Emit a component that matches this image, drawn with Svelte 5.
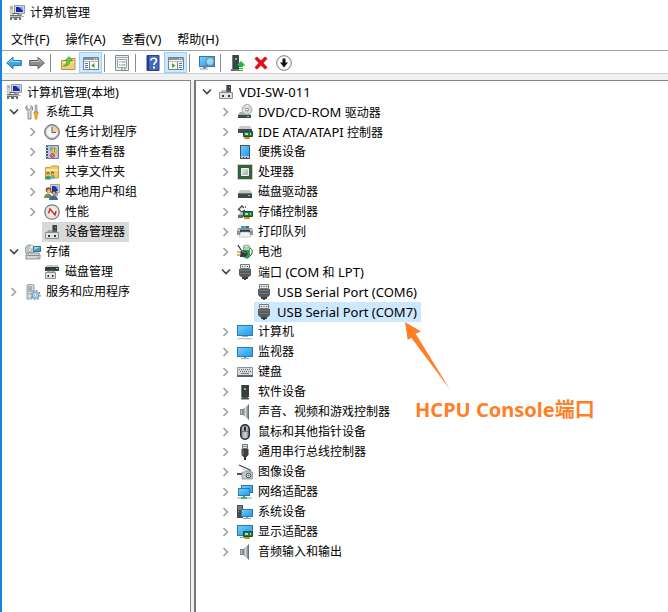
<script>
  let system = $state([
    { text: '计算机管理(本地)', icon: 'manage', root: true, open: true, children: [
      { text: '系统工具', icon: 'tools', open: true, children: [
        { text: '任务计划程序', icon: 'clock', children: [] },
        { text: '事件查看器', icon: 'event', children: [] },
        { text: '共享文件夹', icon: 'shared', children: [] },
        { text: '本地用户和组', icon: 'users', children: [] },
        { text: '性能', icon: 'perf', children: [] },
        { text: '设备管理器', icon: 'device', selected: 'grey' }
      ] },
      { text: '存储', icon: 'storage', open: true, children: [
        { text: '磁盘管理', icon: 'diskmgmt' }
      ] },
      { text: '服务和应用程序', icon: 'services', children: [] }
    ] }
  ]);

  let devices = $state([
    { text: 'VDI-SW-011', icon: 'device', open: true, children: [
      { text: 'DVD/CD-ROM 驱动器', icon: 'dvd', children: [] },
      { text: 'IDE ATA/ATAPI 控制器', icon: 'ide', children: [] },
      { text: '便携设备', icon: 'portable', children: [] },
      { text: '处理器', icon: 'cpu', children: [] },
      { text: '磁盘驱动器', icon: 'disk', children: [] },
      { text: '存储控制器', icon: 'storctl', children: [] },
      { text: '打印队列', icon: 'printer', children: [] },
      { text: '电池', icon: 'battery', children: [] },
      { text: '端口 (COM 和 LPT)', icon: 'port', open: true, children: [
        { text: 'USB Serial Port (COM6)', icon: 'port' },
        { text: 'USB Serial Port (COM7)', icon: 'port', selected: 'blue' }
      ] },
      { text: '计算机', icon: 'computer', children: [] },
      { text: '监视器', icon: 'monitor', children: [] },
      { text: '键盘', icon: 'keyboard', children: [] },
      { text: '软件设备', icon: 'software', children: [] },
      { text: '声音、视频和游戏控制器', icon: 'speaker', children: [] },
      { text: '鼠标和其他指针设备', icon: 'mouse', children: [] },
      { text: '通用串行总线控制器', icon: 'usb', children: [] },
      { text: '图像设备', icon: 'imaging', children: [] },
      { text: '网络适配器', icon: 'network', children: [] },
      { text: '系统设备', icon: 'sysdev', children: [] },
      { text: '显示适配器', icon: 'display', children: [] },
      { text: '音频输入和输出', icon: 'speaker', children: [] }
    ] }
  ]);

  const menus = ['文件(F)', '操作(A)', '查看(V)', '帮助(H)'];
  const tools = [
    ['back', '后退'], ['forward', '前进'], null,
    ['upfolder', '上移一级'], ['paneleft', '显示/隐藏控制台树', true], null,
    ['props', '属性'], null,
    ['help', '帮助'], ['paneright', '显示/隐藏操作窗格', true], null,
    ['scan', '扫描检测硬件改动'], null,
    ['update', '更新驱动程序'], ['remove', '卸载设备'], ['disable', '禁用设备']
  ];

  // Latin runs are set one size up from the Chinese text around them.
  const runs = (text) => text.split(/([\x20-\x7e]+)/).filter(Boolean);
  const isLatin = (run) => run.charCodeAt(0) < 127;
</script>

{#snippet mixed(text)}
  <span class="text">{#each runs(text) as run}{#if isLatin(run)}<span class="latin">{run}</span>{:else}{run}{/if}{/each}</span>
{/snippet}

{#snippet screen(x, y, w, h)}
  <rect {x} {y} width={w} height={h} fill="#2f7ba5" />
  <rect x={x + 1} y={y + 1} width={w - 2} height={h - 2} fill="url(#sky)" />
{/snippet}

{#snippet board()}
  <path d="M6.500 7.500h9v5h-9z" fill="#1f7a50" stroke="#125437" />
  <path d="M8 9h3v2H8zM13 9h1v2h-1z" fill="#b9d8c4" />
  <path d="M7 13h6v2H7z" fill="#f0a11b" /><path d="M9 13v2M11 13v2" stroke="#a86208" stroke-width=".6" />
{/snippet}

{#snippet icon(name)}
  <svg class="icon" viewBox="0 0 16 16" aria-hidden="true">
    {#if name === 'manage'}
      <path d="M5.500.5h10v8h-10z" fill="#d8d8cf" stroke="#9a9a94" />
      <path d="M7 2h7v5H7z" fill="#1328b8" /><path d="M10 2h4v4z" fill="#7fa8ff" />
      <path d="M9 9h4v2h2v1H7v-1h2z" fill="#b4b4ae" />
      <path d="M1 1h3v8H1z" fill="#d7d7d0" stroke="#aaa" stroke-width=".5" /><path d="M1.500 3h2" stroke="#777" />
      <path d="M1 10h11v5H1z" fill="#6c7478" /><path d="M1 11.500h11" stroke="#b8c1c4" /><path d="M3 13h2v2H3zM8 13h2v2H8z" fill="#e9eeee" /><path d="M4 10V8.500h5V10" fill="none" stroke="#596267" />
    {:else if name === 'tools'}
      <path d="M2 1.500v3l2 1 2-1v-3l1.500 1.500v3L6 7.500V15H3V7.500L1 5V3z" fill="#d9dcdd" stroke="#6f7477" stroke-width=".8" />
      <path d="M10 1h2v7h-2z" fill="#bfc4c7" stroke="#777" stroke-width=".5" /><path d="M9 8h4v2l-1 1v3.500l-1 1-1-1V11L9 10z" fill="#f6b522" stroke="#bf7b0c" stroke-width=".7" />
    {:else if name === 'clock'}
      <circle cx="8" cy="8" r="7.400" fill="#aeb3b8" stroke="#696e73" /><circle cx="8" cy="8" r="5.800" fill="#f4f5f2" />
      <path d="M8 8V2.200A5.800 5.800 0 0 1 13.800 8z" fill="#f4d48c" /><path d="M8 3v5.500h4" fill="none" stroke="#555b63" />
    {:else if name === 'event'}
      <path d="M2.500 1.500h12v13h-12z" fill="#b6c7db" stroke="#647c9e" /><path d="M2 2h2v12H2z" fill="#45556f" /><path d="M1 3.500h3M1 6.500h3M1 9.500h3M1 12.500h3" stroke="#c6ccd2" />
      <path d="M6 4h3M6 6h2M6 12h2" stroke="#57729b" /><path d="M10.500 3l3 5h-6z" fill="#ffdb31" stroke="#c39500" stroke-width=".5" /><path d="M10.500 4.500v2M10.500 7v.7" stroke="#443" stroke-width=".8" />
      <circle cx="8.500" cy="11.500" r="2.300" fill="#d9392e" /><path d="M7.700 10.700l1.600 1.600m0-1.600l-1.600 1.600" stroke="#fff" stroke-width=".7" />
    {:else if name === 'shared'}
      <path d="M1.500 3.500h5l1-1.500h7v12h-13z" fill="#f0ca64" stroke="#c99b36" /><path d="M2 5h12v2H2z" fill="#ffe8a1" />
      <circle cx="4" cy="9.500" r="1.500" fill="#704622" /><circle cx="8.500" cy="9" r="1.500" fill="#704622" /><circle cx="4" cy="10.200" r=".9" fill="#efba91" /><circle cx="8.500" cy="9.700" r=".9" fill="#efba91" />
      <path d="M1 15.500c0-5 6-5 6 0z" fill="#3f9275" /><path d="M6 14.500c0-5 5-5 5 0z" fill="#61b2a4" />
    {:else if name === 'users'}
      <path d="M6.500.5h9v8h-9z" fill="#dad9d0" stroke="#a2a29b" /><path d="M8 2h6v5H8z" fill="#1835c2" /><path d="M11 2h3v4z" fill="#82a7ff" /><path d="M9 9h5v3H9z" fill="#aaa" />
      <circle cx="4.500" cy="6" r="2.800" fill="#80552d" /><circle cx="4.800" cy="7" r="1.700" fill="#f0c097" /><circle cx="10" cy="8" r="2.500" fill="#4a341d" /><circle cx="10" cy="9" r="1.600" fill="#e5ac7d" />
      <path d="M0 14c0-6 8-6 8 0z" fill="#6c9550" /><path d="M5 16c0-6 9-6 9 0z" fill="#3e69a2" />
    {:else if name === 'perf'}
      <circle cx="8" cy="8" r="7.200" fill="#f3f3ef" stroke="#777b7d" stroke-width="1.300" /><circle cx="8" cy="8" r="5" fill="none" stroke="#bcbcb9" stroke-dasharray="1 1" />
      <path d="M4.500 9.500L6 5l5 6 1-4" fill="none" stroke="#d52822" stroke-width="1.400" />
    {:else if name === 'device'}
      <path d="M8 1h5v8H8z" fill="#3d4348" /><path d="M8 1h1v8H8z" fill="#7d8487" /><path d="M11 3h1v1h-1z" fill="#61e56b" />
      <path d="M4 9V7h8v2" fill="none" stroke="#777" /><path d="M1.500 8.500h13v6h-13z" fill="#e3e4e4" stroke="#8c9092" /><path d="M4 11h2v2H4zM10 11h2v2h-2z" fill="#353a3f" />
    {:else if name === 'storage'}
      <circle cx="5" cy="6" r="5" fill="#c3c9ca" stroke="#8a9294" /><circle cx="5" cy="6" r="1.500" fill="#fff" stroke="#8a9294" stroke-width=".6" /><path d="M6 1l-1 4 4-2z" fill="#eef4e1" />
      <path d="M8.500 2.500h7v5h-7z" fill="#35a0d2" stroke="#4d6d7d" /><path d="M9 3h6l-6 3z" fill="#8edcf5" />
      <path d="M2 9h12l1 2v4H1v-4z" fill="#d4d8d9" stroke="#777e81" stroke-width=".8" /><path d="M1.500 11.500h13" stroke="#858c8e" /><path d="M12 13h1.500v1H12z" fill="#3bc454" />
    {:else if name === 'diskmgmt'}
      <path d="M2 3l1-2h11l1 2z" fill="#c5c8c9" /><path d="M1 3h14v4H1z" fill="#353b3f" /><path d="M12 4h2v1h-2z" fill="#56e162" /><path d="M4 9V7h6v2" fill="none" stroke="#777" /><path d="M1.500 8.500h10v6h-10z" fill="#e5e6e6" stroke="#8c9092" /><path d="M3.500 11H5v2H3.500zM8 11h1.500v2H8z" fill="#353a3f" />
    {:else if name === 'services'}
      <path d="M2 1l5-1 2 1v12l-2 2H2z" fill="#d3d9db" stroke="#798286" stroke-width=".7" /><path d="M3 3h4M3 5h4M3 7h4" stroke="#6d787e" stroke-width=".8" /><path d="M3 9h1v1H3z" fill="#43b65d" />
      <circle cx="10.500" cy="11" r="4.500" fill="none" stroke="#6d9bbd" stroke-width="1.500" stroke-dasharray="1.700 1.800" /><circle cx="10.500" cy="11" r="3" fill="#dcebf6" stroke="#7fa9c8" stroke-width="1.600" /><circle cx="10.500" cy="11" r="1.200" fill="#fff" stroke="#6d9bbd" stroke-width=".6" />
    {:else if name === 'dvd'}
      <circle cx="10" cy="5.500" r="5" fill="#d5d8d8" stroke="#999e9f" stroke-width=".8" /><circle cx="10" cy="5.500" r="1.500" fill="#fff" stroke="#858b8d" /><path d="M10 1v3M6 7l2-1" stroke="#fff" />
      <path d="M3 8h2l3 2h5l1 1H1z" fill="#a6abad" /><path d="M1 11h13v3H1z" fill="#41484b" /><path d="M10 12h2v1h-2z" fill="#58e765" />
    {:else if name === 'ide'}
      <path d="M1 5l2-3h10l2 3z" fill="#c7caca" /><path d="M1 5h14v4H1z" fill="#454b4e" />
      {@render board()}
    {:else if name === 'portable'}
      <path d="M3 1h10v14H3z" fill="#4a5257" /><path d="M4 2h8v10H4z" fill="url(#sky)" /><path d="M4 12h8v2H4z" fill="#c2c7ca" /><path d="M6 13h1v1H6zM9 13h1v1H9z" fill="#333" />
    {:else if name === 'cpu'}
      <path d="M.5.5h15v15H.5z" fill="none" stroke="#b99b49" stroke-dasharray="1 1" /><path d="M1 1h14v14H1z" fill="#2e6149" /><path d="M4.500 4.500h7v7h-7z" fill="#d2d5d3" stroke="#f2f4f2" /><path d="M5 11l6-6v6z" fill="#b8bdbb" />
    {:else if name === 'disk'}
      <path d="M1 9l2-3h10l2 3z" fill="#c6c9ca" /><path d="M1 9h14v5H1z" fill="#40464a" /><path d="M1 9h14v1H1z" fill="#73797c" /><path d="M11 11h2v1h-2z" fill="#58ea64" />
    {:else if name === 'storctl'}
      <path d="M7 4L5 2 1.500 5.500 5 8l3-2M8 3h1" fill="none" stroke="#444b4f" stroke-width="1.300" /><path d="M2 10l2-2h3v5H1z" fill="#b4babc" /><path d="M1 11h5v3H1z" fill="#666c70" />
      {@render board()}
    {:else if name === 'printer'}
      <path d="M4 2h8v4H4z" fill="#2a9cde" /><path d="M7 2h2v3H7z" fill="#3ec86a" /><path d="M9 2h3v3H9z" fill="#2765cc" /><path d="M1 4h14l1 3v4h-3V9H3v2H0V7z" fill="#8b9396" /><path d="M1 5h2v2H1zM13 5h2v2h-2z" fill="#c4cacd" /><path d="M3 6h10v2H3z" fill="#343a3e" /><path d="M4 8h8l2 5H2z" fill="#f3f5f5" stroke="#a7adb0" stroke-width=".6" />
    {:else if name === 'battery'}
      <path d="M6 2l3-1 4 1v11l-3 2-4-2z" fill="#29a24b" /><ellipse cx="9.500" cy="2.500" rx="3.500" ry="1.500" fill="#cfd6d2" stroke="#8d9591" stroke-width=".6" /><path d="M6.500 4h6v2h-6z" fill="#8fe29c" /><path d="M13 4c3 1 3 6 0 8" fill="none" stroke="#34383a" />
      <path d="M1 1l3 5" stroke="#34383a" stroke-width="1.300" /><path d="M0 8h4M0 11h4" stroke="#c6a339" stroke-width="1.500" /><path d="M4 6l5 1 2 3-3 3-5 0z" fill="#33393c" /><path d="M5 7.500l4 1" stroke="#858d90" />
    {:else if name === 'port'}
      <path d="M3.500.5h9v4h-9z" fill="#e3e3e2" stroke="#777b7d" /><path d="M5 2h1v1H5zM7.500 2h1v1h-1zM10 2h1v1h-1z" fill="#555" /><path d="M2 5h12v6l-2 2H4l-2-2z" fill="#555a5e" /><path d="M3 6.500h10M3 9.500h10" stroke="#74797c" /><path d="M5 13h2v2H5zM7 13h2v3H7zM9 13h2v2H9z" fill="#3d4144" />
    {:else if name === 'computer'}
      {@render screen(0, 1, 16, 11)}
      <path d="M5 12h6v1H5z" fill="#8cb4c7" /><path d="M1 14h14v1H1z" fill="#9faab3" /><path d="M0 15h16" stroke="#d8dfe4" />
    {:else if name === 'monitor'}
      {@render screen(0, 3, 16, 10)}
      <path d="M7 13h2v1H7z" fill="#6c8998" /><path d="M4 14h8v1H4z" fill="#9eb1bd" />
    {:else if name === 'keyboard'}
      <path d="M.5 3.500h15v9H.5z" fill="#d8dbdd" stroke="#8c9296" /><path d="M0 11h16v2H0z" fill="#5d6468" /><path d="M2 5.500h12M3 7.500h11" stroke="#646a6e" stroke-dasharray="1 1" /><path d="M4 9.500h8" stroke="#7b8185" />
    {:else if name === 'software'}
      <path d="M4 1h8v12H4z" fill="#373d40" /><path d="M4 1h1v12H4z" fill="#727779" /><path d="M7 4h2v2H7z" fill="#54df56" /><path d="M5 13h6v1H5zM4 14h8v1.500H4z" fill="#4b5255" />
    {:else if name === 'speaker'}
      <path d="M3 5h3v6H3z" fill="#7f878d" /><path d="M6 5l5-4v14l-5-4z" fill="url(#steel)" /><path d="M11 .5h1v15h-1z" fill="#697177" /><path d="M4 6h1v4H4z" fill="#c1c8cc" />
    {:else if name === 'mouse'}
      <rect x="3.700" y=".7" width="8.600" height="14.600" rx="4.300" fill="url(#steel)" stroke="#22282d" stroke-width="1.400" /><path d="M4 7.500h8M8 1v6" stroke="#4e585f" stroke-width=".7" /><rect x="7" y="2.500" width="2" height="4.500" rx="1" fill="#252b30" />
    {:else if name === 'usb'}
      <path d="M5.500.5h5v4h-5z" fill="#e2e4e5" stroke="#6e7376" /><path d="M6.500 2h1v1h-1zM8.500 2h1v1h-1z" fill="#444" /><path d="M4.500 5h7v6l-2 2h-3l-2-2z" fill="#3a3e41" /><path d="M5.500 6h1v5h-1z" fill="#7b8285" /><path d="M7 13h2v3H7z" fill="#2e3134" />
    {:else if name === 'imaging'}
      <path d="M2 1l12 5.500" stroke="#3f454a" stroke-width="1.300" /><path d="M5 5l9 3" stroke="#c3c8cb" /><path d="M0 9h6v2H0z" fill="#51585d" /><path d="M5 8h3l1-1h4v1h2.500v7H5z" fill="#c3c8ca" stroke="#7c8388" stroke-width=".7" /><circle cx="11.500" cy="11.500" r="2.300" fill="#e6eff1" stroke="#444a4e" /><circle cx="11.500" cy="11.500" r="1" fill="#238c97" />
    {:else if name === 'network'}
      {@render screen(4, 1, 12, 8)}
      {@render screen(1, 4, 12, 8)}
      <path d="M6 12h2v1H6z" fill="#39a854" /><path d="M0 14h15" stroke="#cbd0d3" stroke-width="2" /><path d="M4 13h6v2H4z" fill="#42b861" />
    {:else if name === 'sysdev'}
      <path d="M0 1h6v13H0z" fill="#454b4f" /><path d="M1 3h4M1 5h4" stroke="#a7adb0" /><path d="M1 7h1v1H1z" fill="#57dc5c" />
      {@render screen(4, 5, 12, 8)}
      <path d="M9 13h2v1H9zM6 14h8v1H6z" fill="#91a7b4" />
    {:else if name === 'display'}
      {@render screen(0, 1, 16, 11)}
      <path d="M3 13h4v1H3z" fill="#8ca4b1" />
      {@render board()}
    {:else if name === 'back'}
      <path d="M.7 8L7 2.300V5.500h8.300v5H7v3.200z" fill="#3ba8e8" stroke="#2374ad" /><path d="M2.500 7.500L6 4.500v2h8" fill="none" stroke="#a3def8" />
    {:else if name === 'forward'}
      <path d="M15.300 8L9 2.300v3.200H.7v5H9v3.200z" fill="#8b8e90" stroke="#5f6264" /><path d="M2 6.500h8v-2l3 3" fill="none" stroke="#c3c5c6" />
    {:else if name === 'upfolder'}
      <path d="M1.500 5.500h7l1.500-2h5v11h-13.500z" fill="#efd07a" stroke="#b5934b" /><path d="M2 7h12v1H2z" fill="#ffeaaa" /><path d="M3 11c3-1 4-3 4-5.500H5l4-4 3.500 4.500h-2.500c0 4-3 5.500-7 5z" fill="#65c83d" stroke="#3a912a" stroke-width=".6" />
    {:else if name === 'paneleft' || name === 'paneright'}
      <path d="M.5 2.500h15v12H.5z" fill="#f7f8f9" stroke="#7b8186" /><path d="M1 3h14v2H1z" fill="#89939a" /><path d="M11 4h1M13 4h1" stroke="#fff" /><path d="M1 6.500h14" stroke="#b2b8bc" />
      {#if name === 'paneleft'}
        <path d="M6.500 7v7" stroke="#7b8186" /><path d="M2 8.500h3M2 10.500h3M2 12.500h3" stroke="#477bb2" /><path d="M11.500 8v5L8 10.500z" fill="#42ad35" />
      {:else}
        <path d="M9.500 7v7" stroke="#7b8186" /><path d="M11 8.500h3M11 10.500h3M11 12.500h3" stroke="#477bb2" /><path d="M4 8v5l3.500-2.500z" fill="#42ad35" />
      {/if}
    {:else if name === 'props'}
      <path d="M1.500.5h13v15h-13z" fill="#eceeee" stroke="#858b8e" /><path d="M2 2.500h12" stroke="#a5abae" /><path d="M3.500 4.500h9v8h-9z" fill="#fff" stroke="#9da3a7" /><path d="M5 7h1.500M5 10h1.500" stroke="#31a0dc" /><path d="M7.500 7h4M7.500 10h4" stroke="#737a7e" /><path d="M7 14h2M10 14h2" stroke="#6f777b" />
    {:else if name === 'help'}
      <path d="M2 .5h12v15H2z" fill="#4668bb" stroke="#24418f" /><path d="M2 1h2v14H2z" fill="#233f8b" />
      <path d="M6 5.500c0-3 5.500-3 5.500 0 0 2-2.500 2-2.500 4.500" fill="none" stroke="#fff" stroke-width="1.700" /><path d="M8 11.500h2v2H8z" fill="#fff" />
    {:else if name === 'scan'}
      {@render screen(0, 1, 16, 11)}
      <path d="M1 14h8M5 12.500h3" stroke="#8a9ba7" /><path d="M8.500 9.500l-4 4" stroke="#68849a" stroke-width="2" /><circle cx="11" cy="6.500" r="4" fill="#a5ddf8" fill-opacity=".85" stroke="#71899a" />
    {:else if name === 'update'}
      <path d="M2 0h7v14H2z" fill="#3d4346" /><path d="M2 0h1v14H2z" fill="#777e81" /><path d="M5 3h2v2H5z" fill="#4fdc50" /><path d="M1 14h8v2H1z" fill="#6a7174" /><path d="M11 6l4.500 4.500H13V12H9v-1.500H6.500zM9 13h4v1H9zM9 15h4v1H9z" fill="#1abe32" />
    {:else if name === 'remove'}
      <path d="M1.500 3.500l2.500-2 4 4 4-4 2.500 2L10.500 8l4 4.500-2.500 2-4-4-4 4-2.500-2 4-4.500z" fill="#df1118" />
    {:else if name === 'disable'}
      <circle cx="8" cy="8" r="7.300" fill="#fff" stroke="#777" /><path d="M6.500 3.500h3v4H12l-4 5-4-5h2.500z" fill="#171717" />
    {/if}
  </svg>
{/snippet}

{#snippet branch(nodes)}
  {#each nodes as node}
    <li role="treeitem" aria-selected={!!node.selected} aria-expanded={node.children ? !!node.open : undefined}>
      <div class="row">
        {#if !node.root}
          {#if node.children}
            <button class="twist" class:open={node.open} aria-label={node.text} onclick={() => (node.open = !node.open)}>
              <svg viewBox="0 0 10 10" aria-hidden="true"><path d="M2.500 1l4 4-4 4" /></svg>
            </button>
          {:else}
            <span class="twist"></span>
          {/if}
        {/if}
        <span class="label {node.selected ?? ''}">{@render icon(node.icon)}{@render mixed(node.text)}</span>
      </div>
      {#if node.open}
        <ul role="group" class:flush={node.root}>{@render branch(node.children)}</ul>
      {/if}
    </li>
  {/each}
{/snippet}

<svg class="defs" aria-hidden="true">
  <defs>
    <linearGradient id="sky" x1="0" y1="0" x2="1" y2="1"><stop offset="0" stop-color="#78cdf8" /><stop offset=".5" stop-color="#45b4f6" /><stop offset="1" stop-color="#219df0" /></linearGradient>
    <linearGradient id="steel"><stop offset="0" stop-color="#737e87" /><stop offset=".5" stop-color="#d0d6da" /><stop offset="1" stop-color="#78848d" /></linearGradient>
  </defs>
</svg>

<div class="window">
  <header>{@render icon('manage')}<span>计算机管理</span></header>
  <nav>
    {#each menus as menu}<button>{@render mixed(menu)}</button>{/each}
  </nav>
  <div class="toolbar" role="toolbar" aria-label="工具栏">
    {#each tools as tool}
      {#if tool}
        <button class:on={tool[2]} aria-label={tool[1]}>{@render icon(tool[0])}</button>
      {:else}
        <i class="sep"></i>
      {/if}
    {/each}
  </div>
  <main>
    <section class="side"><ul role="tree" aria-label="控制台树">{@render branch(system)}</ul></section>
    <section class="detail">
      <ul role="tree" aria-label="设备">{@render branch(devices)}</ul>
      <div class="note">
        <svg viewBox="0 0 45 68" aria-hidden="true"><path d="M0 0l16 9.500-5.300 2.200L45 67.500 6.300 15.700 2.700 18z" /></svg>
        <strong>HCPU Console端口</strong>
      </div>
    </section>
  </main>
</div>

<style>
  :global(body) { margin: 0; }
  .defs { position: absolute; width: 0; height: 0; }
  .window {
    box-sizing: border-box;
    display: flex;
    flex-direction: column;
    min-height: 100vh;
    border-left: 2px solid #1883d7;
    background: #fff;
    color: #000;
    font: 12px/20px "Noto Sans", "Noto Sans CJK SC", sans-serif;
  }
  button { padding: 0; border: 0; background: none; color: inherit; font: inherit; }
  .icon { display: block; flex: none; width: 16px; height: 16px; }
  .text { white-space: pre; }
  .latin { font-size: 13px; }
  header { display: flex; align-items: center; gap: 5px; box-sizing: border-box; height: 24px; padding: 1px 0 0 7px; }
  nav { display: flex; align-items: center; gap: 16px; height: 26px; padding: 4px 0 0 9px; box-sizing: border-box; }
  .toolbar {
    display: flex;
    align-items: center;
    height: 21px;
    padding: 1px 0 0 0;
    border-top: 1px solid #a0a0a0;
    border-bottom: 1px solid #d0d0d0;
  }
  .toolbar button { display: grid; place-items: center; box-sizing: border-box; width: 23px; height: 21px; }
  .toolbar .on { border: 1px solid #99d1ff; background: #cce8ff; }
  .sep { width: 1px; height: 18px; margin: 0 5px 0 2px; background: #8d8d8d; }
  main { display: flex; flex: 1; gap: 3px; padding-top: 6px; background: #f0f0f0; }
  section { padding-top: 1px; background: #fff; border-top: 1px solid #828790; }
  .side { box-sizing: border-box; width: 189px; flex: none; padding-left: 2px; border-right: 1px solid #828790; }
  .detail { position: relative; flex: 1; padding-left: 1px; border-left: 2px solid #777; }
  ul { margin: 0; padding: 0; list-style: none; }
  ul ul { padding-left: 19px; }
  ul .flush { padding-left: 0; }
  .row { display: flex; height: 20px; white-space: nowrap; }
  .twist { display: grid; place-items: center; flex: none; width: 19px; height: 20px; }
  .twist svg { width: 10px; height: 10px; fill: none; stroke: #a0a0a0; stroke-width: 1.600; }
  .open svg { transform: rotate(90deg); stroke: #404040; }
  .label { display: flex; align-items: center; gap: 5px; padding: 0 4px 0 2px; }
  .grey { background: #d9d9d9; }
  .blue { background: #cce8ff; }
  .note { position: absolute; left: 209px; top: 241px; color: #ff7f27; }
  .note svg { display: block; width: 45px; height: 68px; fill: currentColor; }
  .note strong { display: block; padding-left: 10px; font-size: 20px; line-height: 40px; white-space: nowrap; }
</style>
